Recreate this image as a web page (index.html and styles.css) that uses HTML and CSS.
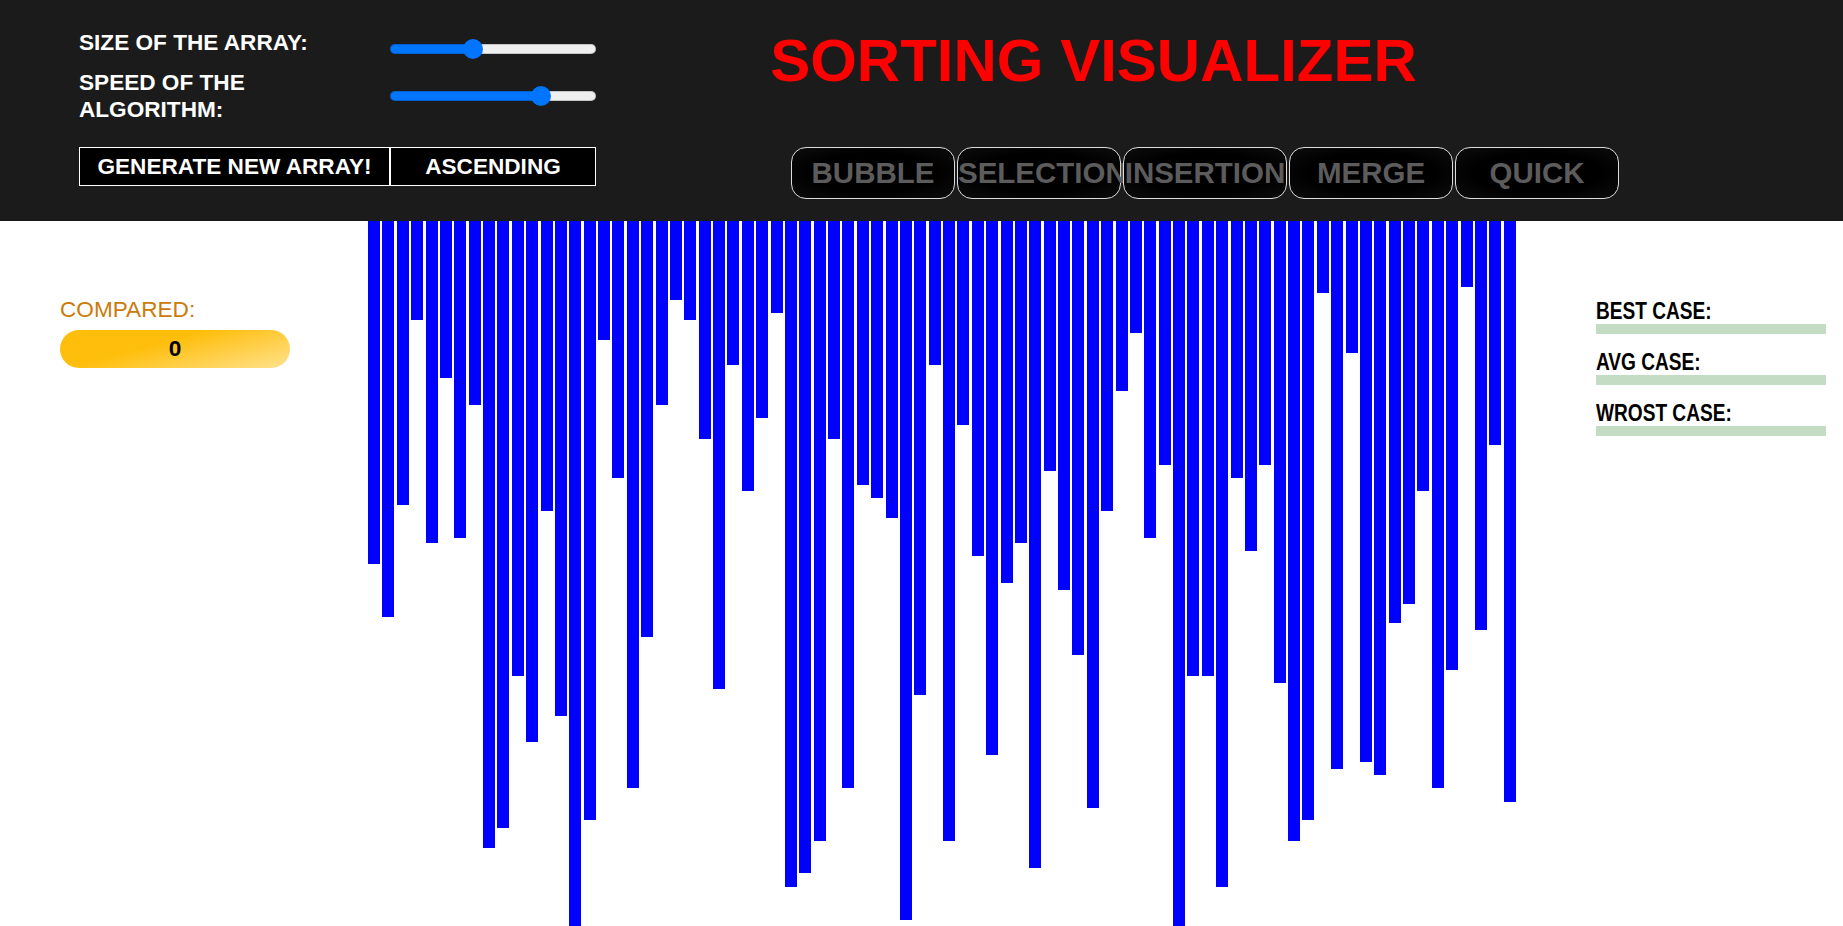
FILE: index.html
```html
<!DOCTYPE html>
<html lang="en">
<head>
<meta charset="utf-8">
<title>Sorting Visualizer</title>
<link rel="stylesheet" href="styles.css">
</head>
<body>
<header class="topbar">
  <div class="panel">
    <div class="controls">
      <div class="label first">SIZE OF THE ARRAY:</div>
      <input class="slider" type="range" min="0" max="185" value="73" style="--fill:40.5%">
      <div class="label">SPEED OF THE ALGORITHM:</div>
      <input class="slider" type="range" min="0" max="185" value="140" style="--fill:73%">
    </div>
    <div class="actions">
      <button class="act gen">GENERATE NEW ARRAY!</button>
      <button class="act asc">ASCENDING</button>
    </div>
  </div>
  <div class="nav">
    <h1 class="title">SORTING VISUALIZER</h1>
    <div class="algos">
      <button class="algo">BUBBLE</button>
      <button class="algo">SELECTION</button>
      <button class="algo">INSERTION</button>
      <button class="algo">MERGE</button>
      <button class="algo">QUICK</button>
    </div>
  </div>
</header>
<main class="stage">
  <aside class="stats">
    <div class="stat-label">COMPARED:</div>
    <div class="pill">0</div>
  </aside>
  <div class="bars">
    <div class="bar" style="height:343px"></div>
    <div class="bar" style="height:396px"></div>
    <div class="bar" style="height:284px"></div>
    <div class="bar" style="height:99px"></div>
    <div class="bar" style="height:322px"></div>
    <div class="bar" style="height:157px"></div>
    <div class="bar" style="height:317px"></div>
    <div class="bar" style="height:184px"></div>
    <div class="bar" style="height:627px"></div>
    <div class="bar" style="height:607px"></div>
    <div class="bar" style="height:455px"></div>
    <div class="bar" style="height:521px"></div>
    <div class="bar" style="height:290px"></div>
    <div class="bar" style="height:495px"></div>
    <div class="bar" style="height:705px"></div>
    <div class="bar" style="height:599px"></div>
    <div class="bar" style="height:119px"></div>
    <div class="bar" style="height:257px"></div>
    <div class="bar" style="height:567px"></div>
    <div class="bar" style="height:416px"></div>
    <div class="bar" style="height:184px"></div>
    <div class="bar" style="height:79px"></div>
    <div class="bar" style="height:99px"></div>
    <div class="bar" style="height:218px"></div>
    <div class="bar" style="height:468px"></div>
    <div class="bar" style="height:144px"></div>
    <div class="bar" style="height:270px"></div>
    <div class="bar" style="height:197px"></div>
    <div class="bar" style="height:92px"></div>
    <div class="bar" style="height:666px"></div>
    <div class="bar" style="height:652px"></div>
    <div class="bar" style="height:620px"></div>
    <div class="bar" style="height:218px"></div>
    <div class="bar" style="height:567px"></div>
    <div class="bar" style="height:264px"></div>
    <div class="bar" style="height:277px"></div>
    <div class="bar" style="height:297px"></div>
    <div class="bar" style="height:699px"></div>
    <div class="bar" style="height:474px"></div>
    <div class="bar" style="height:144px"></div>
    <div class="bar" style="height:620px"></div>
    <div class="bar" style="height:204px"></div>
    <div class="bar" style="height:335px"></div>
    <div class="bar" style="height:534px"></div>
    <div class="bar" style="height:362px"></div>
    <div class="bar" style="height:322px"></div>
    <div class="bar" style="height:647px"></div>
    <div class="bar" style="height:250px"></div>
    <div class="bar" style="height:369px"></div>
    <div class="bar" style="height:434px"></div>
    <div class="bar" style="height:587px"></div>
    <div class="bar" style="height:290px"></div>
    <div class="bar" style="height:170px"></div>
    <div class="bar" style="height:112px"></div>
    <div class="bar" style="height:317px"></div>
    <div class="bar" style="height:244px"></div>
    <div class="bar" style="height:705px"></div>
    <div class="bar" style="height:455px"></div>
    <div class="bar" style="height:455px"></div>
    <div class="bar" style="height:666px"></div>
    <div class="bar" style="height:257px"></div>
    <div class="bar" style="height:330px"></div>
    <div class="bar" style="height:244px"></div>
    <div class="bar" style="height:462px"></div>
    <div class="bar" style="height:620px"></div>
    <div class="bar" style="height:599px"></div>
    <div class="bar" style="height:72px"></div>
    <div class="bar" style="height:548px"></div>
    <div class="bar" style="height:132px"></div>
    <div class="bar" style="height:541px"></div>
    <div class="bar" style="height:554px"></div>
    <div class="bar" style="height:402px"></div>
    <div class="bar" style="height:383px"></div>
    <div class="bar" style="height:270px"></div>
    <div class="bar" style="height:567px"></div>
    <div class="bar" style="height:449px"></div>
    <div class="bar" style="height:66px"></div>
    <div class="bar" style="height:409px"></div>
    <div class="bar" style="height:224px"></div>
    <div class="bar" style="height:581px"></div>
  </div>
  <aside class="complexity">
    <div class="case">BEST CASE:</div>
    <div class="case-bar"></div>
    <div class="case">AVG CASE:</div>
    <div class="case-bar"></div>
    <div class="case">WROST CASE:</div>
    <div class="case-bar"></div>
  </aside>
</main>
</body>
</html>
```

FILE: styles.css
```css
* { box-sizing: border-box; }

html, body {
  margin: 0;
  padding: 0;
  background: #ffffff;
  font-family: "Liberation Sans", Arial, sans-serif;
  overflow: hidden;
}

.topbar {
  display: flex;
  height: 221px;
  background: #1b1b1b;
}

.panel {
  width: 596px;
  padding: 29px 0 0 79px;
}

.controls {
  display: grid;
  grid-template-columns: 311px 206px;
  align-items: center;
}

.label {
  color: #ffffff;
  font-weight: bold;
  font-size: 22.6px;
  line-height: 27px;
  width: 255px;
}

.label.first {
  padding-bottom: 13px;
}

.slider {
  -webkit-appearance: none;
  appearance: none;
  width: 206px;
  height: 20px;
  margin: 0;
  background: transparent;
}

.slider::-webkit-slider-runnable-track {
  height: 10px;
  border-radius: 5px;
  background: linear-gradient(to right, #0075ff var(--fill), #efefef var(--fill));
  box-shadow: inset 0 0 0 1px rgba(0, 0, 0, 0.18);
}

.slider::-webkit-slider-thumb {
  -webkit-appearance: none;
  appearance: none;
  width: 20px;
  height: 20px;
  margin-top: -5px;
  border: none;
  border-radius: 50%;
  background: #0075ff;
}

.actions {
  display: flex;
  margin-top: 24px;
}

.act {
  height: 39px;
  margin: 0;
  padding: 0;
  border: 1px solid #ffffff;
  background: #000000;
  color: #ffffff;
  font-family: "Liberation Sans", Arial, sans-serif;
  font-weight: bold;
  font-size: 22.6px;
  white-space: nowrap;
}

.act.gen { width: 311px; }
.act.asc { width: 206px; }

.nav {
  display: flex;
  flex-direction: column;
}

.title {
  width: 995px;
  margin: 31px 0 0 0;
  color: #ff0000;
  font-size: 60px;
  line-height: 60px;
  font-weight: bold;
  text-align: center;
}

.algos {
  display: flex;
  gap: 2px;
  margin: 56px 0 0 195px;
}

.algo {
  width: 164px;
  height: 52px;
  margin: 0;
  padding: 0;
  border: 1px solid #dcdcdc;
  border-radius: 15px;
  background: radial-gradient(ellipse at center, #000000 55%, #0d0d0d 100%);
  color: #5c5c5c;
  font-family: "Liberation Sans", Arial, sans-serif;
  font-weight: bold;
  font-size: 29.5px;
  white-space: nowrap;
  text-align: center;
}

.stage {
  display: flex;
  height: 705px;
  align-items: flex-start;
}

.stats {
  width: 368px;
  flex: none;
  padding: 76px 0 0 60px;
}

.stat-label {
  color: #cc7a0a;
  font-size: 22.6px;
  line-height: 26px;
}

.pill {
  width: 230px;
  height: 38px;
  margin-top: 7px;
  border-radius: 19px;
  background: linear-gradient(165deg, #ffbe0b 40%, #ffe28e 100%);
  color: #000000;
  font-weight: bold;
  font-size: 22.6px;
  line-height: 38px;
  text-align: center;
}

.bars {
  display: flex;
  align-items: flex-start;
  gap: 2.38px;
  width: 1148px;
  flex: none;
}

.bar {
  width: 12px;
  flex: none;
  background: #0000ff;
}

.complexity {
  width: 230px;
  flex: none;
  margin-left: 80px;
  padding-top: 77px;
}

.case {
  color: #000000;
  font-family: "Liberation Sans", Arial, sans-serif;
  font-weight: bold;
  font-size: 23px;
  line-height: 26px;
  white-space: nowrap;
  transform: scaleX(0.83);
  transform-origin: left center;
}

.case-bar {
  height: 10px;
  margin-bottom: 15px;
  background: #c3dcc3;
}
```
